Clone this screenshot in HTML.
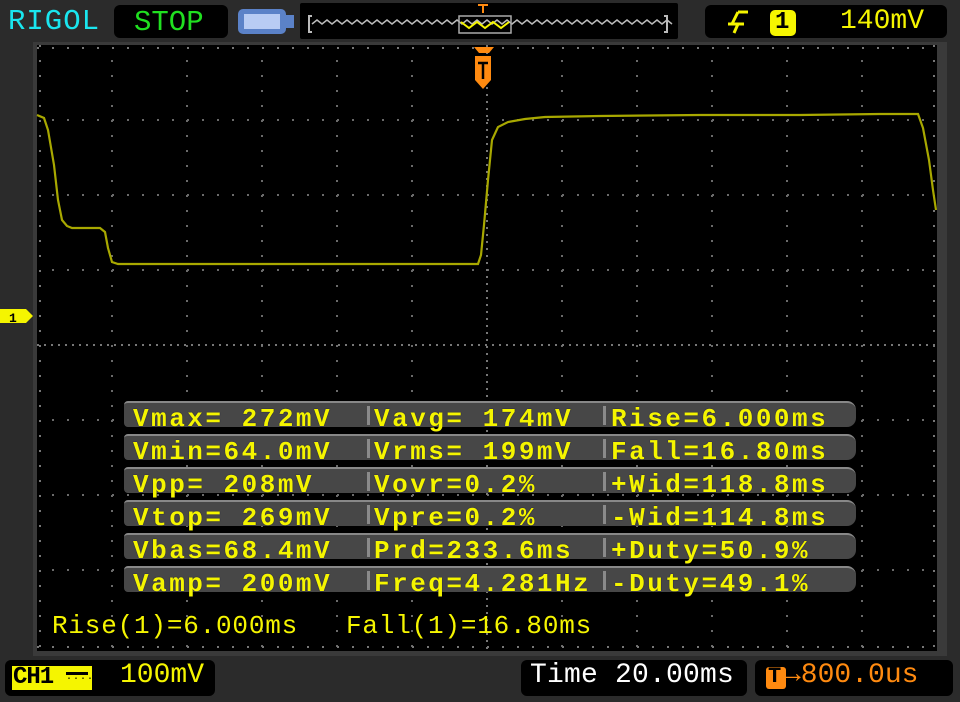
<!DOCTYPE html>
<html><head><style>
body{margin:0;width:960px;height:702px;background:#2b2b2b;overflow:hidden;position:relative;font-family:"Liberation Mono",monospace;}
.t{position:absolute;white-space:pre;line-height:1;}
.box{position:absolute;background:#000;border-radius:6px;}
.row{position:absolute;left:124px;width:732px;height:26px;background:#474747;border-radius:4px 9px 9px 4px;border-top:2px solid #888;box-sizing:border-box;}
.row span{position:absolute;top:1px;color:#f5f500;font-size:26px;letter-spacing:2.5px;font-weight:bold;text-shadow:0 0 1px #003;}
.sep{position:absolute;top:3px;width:3px;height:19px;background:#8a8a8a;}
</style></head><body>
<div class="t" style="left:8px;top:7px;color:#1ae6ef;font-size:29px;letter-spacing:1px">RIGOL</div>
<div class="box" style="left:114px;top:5px;width:114px;height:33px"></div>
<div class="t" style="left:134px;top:8px;color:#20e020;font-size:29px">STOP</div>
<div style="position:absolute;left:238px;top:9px;width:48px;height:25px;background:#5b82c8;border-radius:5px"></div>
<div style="position:absolute;left:286px;top:15px;width:8px;height:13px;background:#5b82c8"></div>
<div style="position:absolute;left:244px;top:14px;width:36px;height:15px;background:#b8ccf4"></div>
<div class="box" style="left:300px;top:3px;width:378px;height:36px;border-radius:2px"></div>
<svg style="position:absolute;left:0;top:0" width="960" height="702">
<polyline points="312,16 309,16 309,32 312,32" fill="none" stroke="#bbb" stroke-width="2"/>
<polyline points="664,16 667,16 667,32 664,32" fill="none" stroke="#bbb" stroke-width="2"/>
<path d="M312,24 l5,-4 l5,4 l5,-4 l5,4 l5,-4 l5,4 l5,-4 l5,4 l5,-4 l5,4 l5,-4 l5,4 l5,-4 l5,4 l5,-4 l5,4 l5,-4 l5,4 l5,-4 l5,4 l5,-4 l5,4 l5,-4 l5,4 l5,-4 l5,4 l5,-4 l5,4 l5,-4 l5,4 l5,-4 l5,4 l5,-4 l5,4 l5,-4 l5,4 l5,-4 l5,4 l5,-4 l5,4 l5,-4 l5,4 l5,-4 l5,4 l5,-4 l5,4 l5,-4 l5,4 l5,-4 l5,4 l5,-4 l5,4 l5,-4 l5,4 l5,-4 l5,4 l5,-4 l5,4 l5,-4 l5,4 l5,-4 l5,4 l5,-4 l5,4 l5,-4 l5,4 l5,-4 l5,4 l5,-4 l5,4 l5,-4 l5,4" fill="none" stroke="#bbb" stroke-width="1.5"/>
<rect x="459" y="16" width="52" height="17" fill="none" stroke="#aaa" stroke-width="1.5"/>
<path d="M461,22 l8,6 l8,-6 l8,6 l8,-6 l8,6 l8,-6" fill="none" stroke="#f5f500" stroke-width="2"/>
<path d="M478,5 h10 M483,5 v8" stroke="#ff8a10" stroke-width="2"/>
<rect x="33" y="42" width="914" height="614" fill="#3a3a3a"/>
<rect x="37" y="45" width="900" height="606" fill="#000"/>
<g stroke="#6a6a6a" stroke-width="2" stroke-dasharray="2 13" fill="none">
<path d="M112,60 V650 M187,60 V650 M262,60 V650 M337,60 V650 M412,60 V650 M562,60 V650 M637,60 V650 M712,60 V650 M787,60 V650 M862,60 V650"/>
<path d="M52,120 H937 M52,195 H937 M52,270 H937 M52,420 H937 M52,495 H937 M52,570 H937"/>
</g>
<g stroke="#777" stroke-width="2" fill="none">
<path d="M487,45 V650" stroke-dasharray="2 5"/>
<path d="M37,345 H937" stroke-dasharray="2 5"/>
<path d="M37,48 H937 M37,647 H937" stroke-dasharray="2 13"/>
<path d="M40,45 V650 M934,45 V650" stroke-dasharray="2 13"/>
</g>
<path d="M474,47 h20 l-5,6 h-10z M475,56 h16 v24 l-8,9 l-8,-9z" fill="#ff8a10"/>
<path d="M478,63 h10 M483,63 v16" stroke="#000" stroke-width="2.5"/>
<path d="M0,309 h26 l7,7 l-7,7 h-26z" fill="#f5f500"/>
<text x="9" y="322" font-family="Liberation Mono" font-size="13" font-weight="bold" fill="#000">1</text>
<polyline fill="none" stroke="#a8a800" stroke-width="2.2" points="37,115 44,118 48,130 54,165 58,200 62,220 67,226 72,228 100,228 105,232 108,248 112,262 118,264 250,264 400,264 478,264 481,255 484,225 488,180 492,140 498,127 508,122 525,119 545,117 600,116 700,115 800,115 880,114 918,114 923,128 929,160 933,190 936,210"/>
</svg>
<div class="box" style="left:705px;top:5px;width:242px;height:33px"></div>
<svg style="position:absolute;left:724px;top:10px" width="30" height="26"><path d="M14,2 h10 M14,2 L8,14 M4,14 h16 M14,14 L10,23" stroke="#f5f500" stroke-width="3" fill="none"/></svg>
<div style="position:absolute;left:770px;top:10px;width:26px;height:26px;background:#f5f500;border-radius:5px"></div>
<div class="t" style="left:775px;top:11px;color:#000;font-size:24px;font-weight:bold">1</div>
<div class="t" style="left:840px;top:8px;color:#f5f500;font-size:28px">140mV</div>

<div class="row" style="top:401px"><span style="left:9px">Vmax= 272mV</span><div class="sep" style="left:243px"></div><span style="left:250px">Vavg= 174mV</span><div class="sep" style="left:479px"></div><span style="left:487px">Rise=6.000ms</span></div>
<div class="row" style="top:434px"><span style="left:9px">Vmin=64.0mV</span><div class="sep" style="left:243px"></div><span style="left:250px">Vrms= 199mV</span><div class="sep" style="left:479px"></div><span style="left:487px">Fall=16.80ms</span></div>
<div class="row" style="top:467px"><span style="left:9px">Vpp= 208mV</span><div class="sep" style="left:243px"></div><span style="left:250px">Vovr=0.2%</span><div class="sep" style="left:479px"></div><span style="left:487px">+Wid=118.8ms</span></div>
<div class="row" style="top:500px"><span style="left:9px">Vtop= 269mV</span><div class="sep" style="left:243px"></div><span style="left:250px">Vpre=0.2%</span><div class="sep" style="left:479px"></div><span style="left:487px">-Wid=114.8ms</span></div>
<div class="row" style="top:533px"><span style="left:9px">Vbas=68.4mV</span><div class="sep" style="left:243px"></div><span style="left:250px">Prd=233.6ms</span><div class="sep" style="left:479px"></div><span style="left:487px">+Duty=50.9%</span></div>
<div class="row" style="top:566px"><span style="left:9px">Vamp= 200mV</span><div class="sep" style="left:243px"></div><span style="left:250px">Freq=4.281Hz</span><div class="sep" style="left:479px"></div><span style="left:487px">-Duty=49.1%</span></div>

<div class="t" style="left:52px;top:613px;color:#f5f500;font-size:26px;letter-spacing:0.8px">Rise(1)=6.000ms</div>
<div class="t" style="left:346px;top:613px;color:#f5f500;font-size:26px;letter-spacing:0.8px">Fall(1)=16.80ms</div>

<div class="box" style="left:5px;top:660px;width:210px;height:36px"></div>
<div style="position:absolute;left:12px;top:666px;width:80px;height:24px;background:#f5f500"></div>
<div class="t" style="left:13px;top:666px;color:#000;font-size:24px;font-weight:bold;letter-spacing:-1px">CH1</div>
<div style="position:absolute;left:66px;top:672px;width:22px;height:3px;background:#000"></div>
<div class="t" style="left:66px;top:675px;color:#000;font-size:10px;letter-spacing:1px">&middot;&middot;&middot;&middot;</div>
<div class="t" style="left:120px;top:662px;color:#f5f500;font-size:28px">100mV</div>
<div class="box" style="left:521px;top:660px;width:226px;height:36px"></div>
<div class="t" style="left:530px;top:662px;color:#fff;font-size:28px;letter-spacing:0.2px">Time 20.00ms</div>
<div class="box" style="left:755px;top:660px;width:198px;height:36px"></div>
<div style="position:absolute;left:766px;top:667px;width:20px;height:22px;background:#ff8a10;border-radius:3px"></div>
<div class="t" style="left:768px;top:666px;color:#000;font-size:22px;font-weight:bold">T</div>
<div class="t" style="left:784px;top:662px;color:#ff8a10;font-size:28px">→800.0us</div>
</body></html>
